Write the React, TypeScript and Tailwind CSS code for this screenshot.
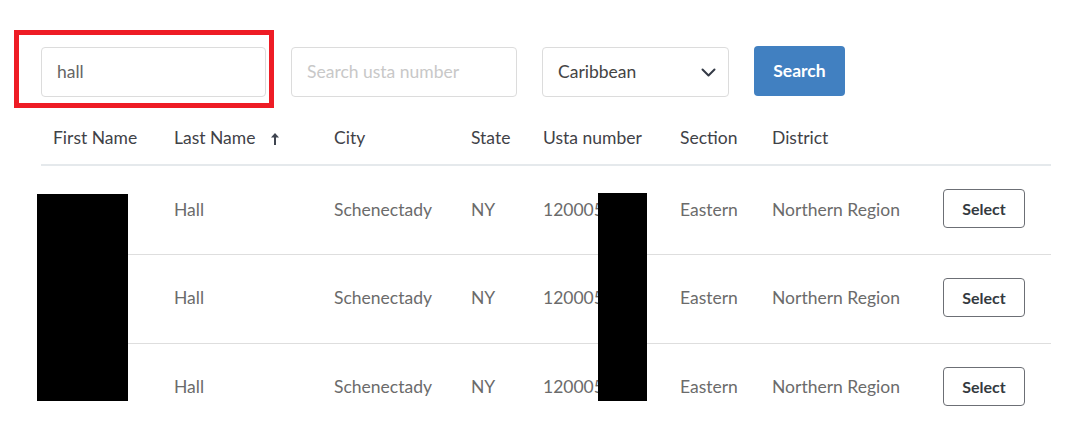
import React from "react";

const font = { fontFamily: "Lato, 'Noto Sans', sans-serif" };

const rows = [
  { last: "Hall", city: "Schenectady", state: "NY", usta: "120005", section: "Eastern", district: "Northern Region" },
  { last: "Hall", city: "Schenectady", state: "NY", usta: "120005", section: "Eastern", district: "Northern Region" },
  { last: "Hall", city: "Schenectady", state: "NY", usta: "120005", section: "Eastern", district: "Northern Region" },
];

const colW = ["w-[121px]", "w-[160px]", "w-[137px]", "w-[72px]", "w-[137px]", "w-[92px]", "w-[171px]", "w-[120px]"];

export default function App() {
  return (
    <div className="relative w-[1078px] h-[430px] overflow-hidden bg-white" style={font}>
      <div className="pl-[41px] pt-[47px]">
        <div className="flex items-center gap-[25px]">
          <div className="w-[225px] h-[50px] border border-[#dcdcdc] rounded-[4px] flex items-center px-[15px] text-[17.5px] text-[#666]">
            hall
          </div>
          <div className="w-[226px] h-[50px] border border-[#dcdcdc] rounded-[4px] flex items-center px-[15px] text-[17.5px] text-[#c8c8c8]">
            Search usta number
          </div>
          <div className="w-[187px] h-[50px] border border-[#dcdcdc] rounded-[4px] flex items-center justify-between pl-[15px] pr-[12px] text-[17.5px] text-[#444]">
            <span>Caribbean</span>
            <svg width="15" height="9" viewBox="0 0 15 9" fill="none">
              <path d="M1.5 1.5 L7.5 7.5 L13.5 1.5" stroke="#343a46" strokeWidth="2" strokeLinecap="round" strokeLinejoin="round" />
            </svg>
          </div>
          <div className="w-[91px] h-[50px] rounded-[4px] bg-[#4180c1] flex items-center justify-center text-white font-bold text-[17.5px] -mt-[2px]">
            Search
          </div>
        </div>

        <table className="mt-[16px] border-collapse w-[1010px] table-fixed">
          <thead>
            <tr className="h-[52px] border-b-[2px] border-[#e5e9ec] text-left text-[17.5px] text-[#3f4247]">
              <th className={`${colW[0]} font-normal pl-[12px]`}>First Name</th>
              <th className={`${colW[1]} font-normal pl-[12px]`}>
                <span className="inline-flex items-center gap-[15px]">
                  Last Name
                  <svg width="10" height="14" viewBox="0 0 10 14" fill="none">
                    <path d="M5 13 V2" stroke="#3f4550" strokeWidth="2" />
                    <path d="M1 5.5 L5 1 L9 5.5 Z" fill="#3f4550" />
                  </svg>
                </span>
              </th>
              <th className={`${colW[2]} font-normal pl-[12px]`}>City</th>
              <th className={`${colW[3]} font-normal pl-[12px]`}>State</th>
              <th className={`${colW[4]} font-normal pl-[12px]`}>Usta number</th>
              <th className={`${colW[5]} font-normal pl-[12px]`}>Section</th>
              <th className={`${colW[6]} font-normal pl-[12px]`}>District</th>
              <th className={`${colW[7]} font-normal pl-[12px]`}></th>
            </tr>
          </thead>
          <tbody>
            {rows.map((r, i) => (
              <tr key={i} className="h-[89px] border-b border-[#dedede] text-[17.5px] text-[#6b6b6b]">
                <td className="pl-[12px]"></td>
                <td className="pl-[12px]">{r.last}</td>
                <td className="pl-[12px]">{r.city}</td>
                <td className="pl-[12px]">{r.state}</td>
                <td className="pl-[12px]">{r.usta}</td>
                <td className="pl-[12px]">{r.section}</td>
                <td className="pl-[12px]">{r.district}</td>
                <td className="pl-[12px]">
                  <div className="w-[82px] h-[39px] -mt-[2px] border border-[#6c6f75] rounded-[4px] flex items-center justify-center text-[16px] font-bold text-[#343a40]">
                    Select
                  </div>
                </td>
              </tr>
            ))}
          </tbody>
        </table>
      </div>

      {/* annotation highlight */}
      <div className="absolute left-[14px] top-[30px] w-[260px] h-[78px] border-[5px] border-[#ee1c25] pointer-events-none" />
      {/* redactions */}
      <div className="absolute left-[37px] top-[194px] w-[91px] h-[207px] bg-black" />
      <div className="absolute left-[598px] top-[193px] w-[49px] h-[208px] bg-black" />
    </div>
  );
}
